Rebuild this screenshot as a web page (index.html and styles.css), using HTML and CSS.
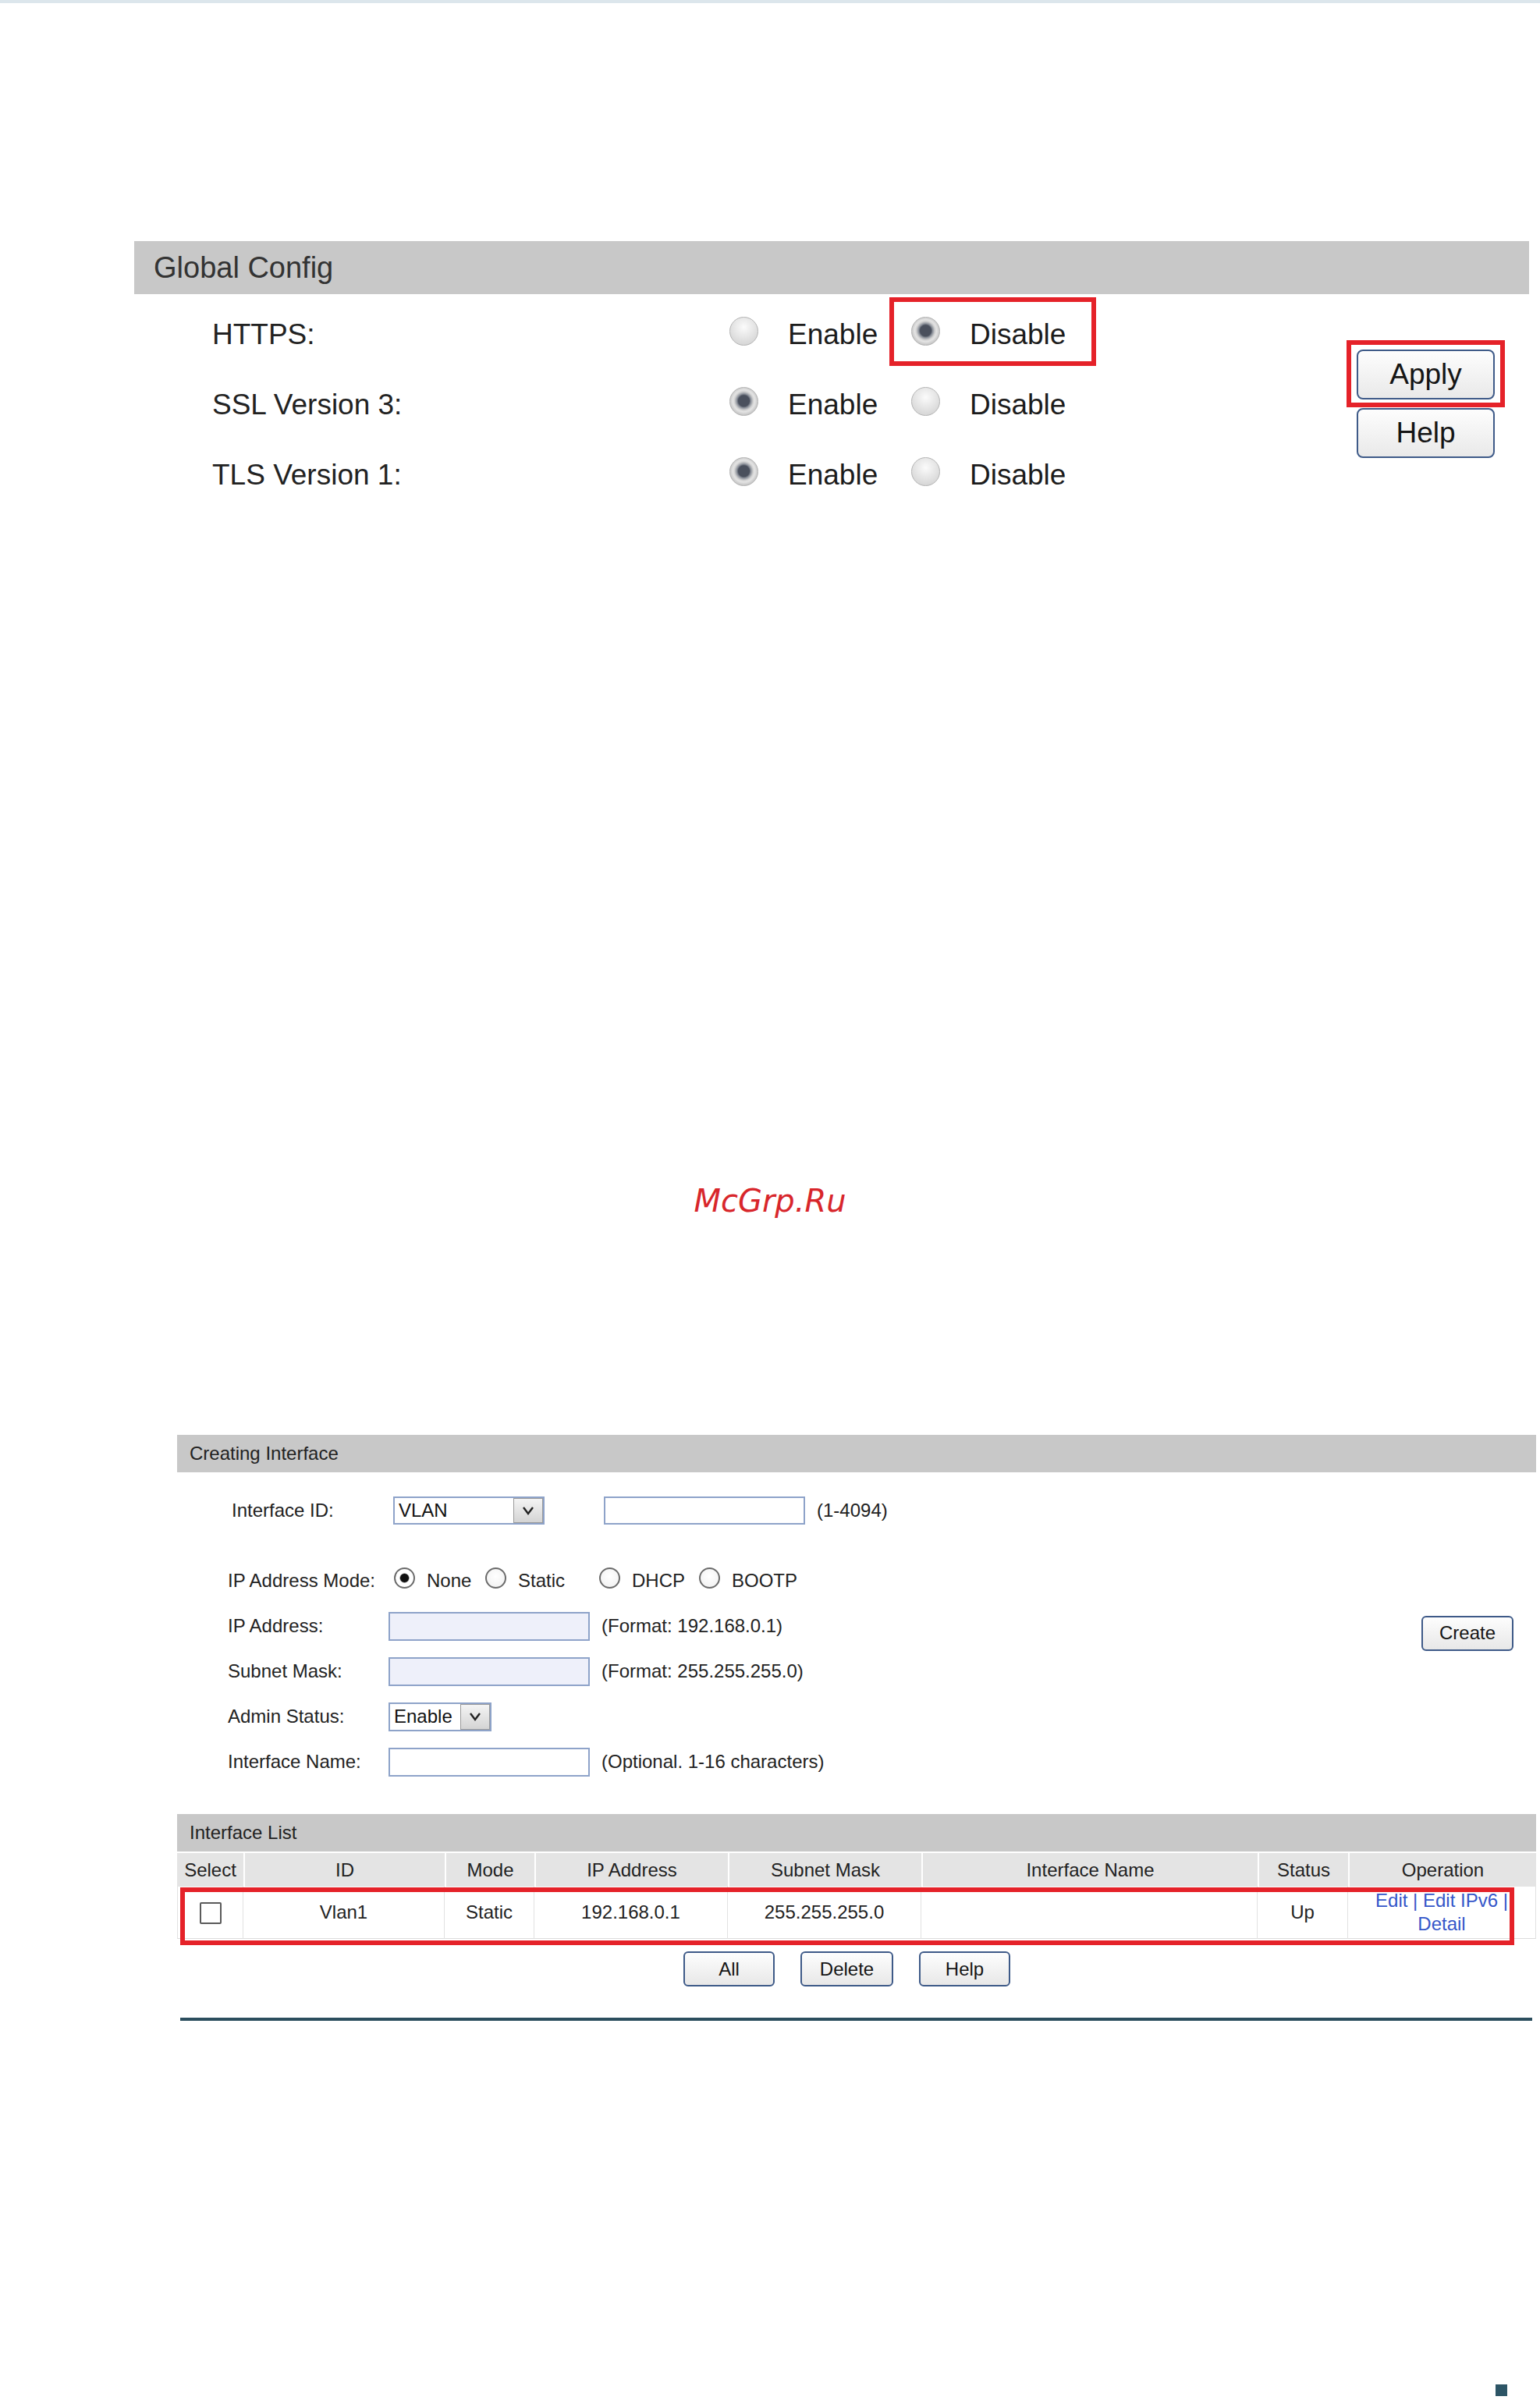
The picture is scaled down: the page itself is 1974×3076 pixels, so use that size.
FILE: index.html
```html
<!DOCTYPE html>
<html lang="en">
<head>
<meta charset="utf-8">
<title>Global Config / Creating Interface</title>
<link rel="stylesheet" href="styles.css">
</head>
<body>
<div class="topbar"></div>

<section class="fig1">
  <div class="bar-lg">Global Config</div>
  <div class="fig1-body">
    <div class="opts">
      <div class="orow">
        <span class="olabel">HTTPS:</span>
        <span class="opt"><span class="rad"></span><span>Enable</span></span>
        <span class="opt marked"><span class="rad on"></span><span>Disable</span></span>
      </div>
      <div class="orow">
        <span class="olabel">SSL Version 3:</span>
        <span class="opt"><span class="rad on"></span><span>Enable</span></span>
        <span class="opt"><span class="rad"></span><span>Disable</span></span>
      </div>
      <div class="orow">
        <span class="olabel">TLS Version 1:</span>
        <span class="opt"><span class="rad on"></span><span>Enable</span></span>
        <span class="opt"><span class="rad"></span><span>Disable</span></span>
      </div>
    </div>
    <div class="btns">
      <span class="markwrap"><button class="btn-lg">Apply</button></span>
      <button class="btn-lg">Help</button>
    </div>
  </div>
</section>

<div class="watermark">McGrp.Ru</div>

<section class="fig2">
  <div class="bar-sm">Creating Interface</div>
  <div class="form">
    <div class="frow idrow">
      <span class="flabel">Interface ID:</span>
      <span class="sel sel-id"><span class="val">VLAN</span><span class="arr"><svg width="18" height="14" viewBox="0 0 18 14"><polyline points="3,3 9,11 15,3" fill="none" stroke="#222" stroke-width="2.4"/></svg></span></span>
      <span class="inp inp-id"></span>
      <span class="hint">(1-4094)</span>
    </div>
    <div class="frow moderow">
      <span class="flabel">IP Address Mode:</span>
      <span class="mopt m1"><span class="rsm on"></span>None</span>
      <span class="mopt m2"><span class="rsm"></span>Static</span>
      <span class="mopt m3"><span class="rsm"></span>DHCP</span>
      <span class="mopt m4"><span class="rsm"></span>BOOTP</span>
    </div>
    <div class="frow">
      <span class="flabel">IP Address:</span>
      <span class="inp dis"></span>
      <span class="hint">(Format: 192.168.0.1)</span>
      <button class="btn-sm create">Create</button>
    </div>
    <div class="frow">
      <span class="flabel">Subnet Mask:</span>
      <span class="inp dis"></span>
      <span class="hint">(Format: 255.255.255.0)</span>
    </div>
    <div class="frow">
      <span class="flabel">Admin Status:</span>
      <span class="sel sel-admin"><span class="val">Enable</span><span class="arr"><svg width="18" height="14" viewBox="0 0 18 14"><polyline points="3,3 9,11 15,3" fill="none" stroke="#222" stroke-width="2.4"/></svg></span></span>
    </div>
    <div class="frow">
      <span class="flabel">Interface Name:</span>
      <span class="inp"></span>
      <span class="hint">(Optional. 1-16 characters)</span>
    </div>
  </div>

  <div class="bar-sm list-bar">Interface List</div>
  <div class="listwrap">
    <table class="list">
      <colgroup>
        <col class="c-sel"><col class="c-id"><col class="c-mode"><col class="c-ip"><col class="c-mask"><col class="c-name"><col class="c-st"><col class="c-op">
      </colgroup>
      <thead>
        <tr><th>Select</th><th>ID</th><th>Mode</th><th>IP Address</th><th>Subnet Mask</th><th>Interface Name</th><th>Status</th><th>Operation</th></tr>
      </thead>
      <tbody>
        <tr>
          <td><span class="chk"></span></td>
          <td>Vlan1</td>
          <td>Static</td>
          <td>192.168.0.1</td>
          <td>255.255.255.0</td>
          <td></td>
          <td>Up</td>
          <td class="ops"><a>Edit</a> | <a>Edit IPv6</a> |<br><a>Detail</a></td>
        </tr>
      </tbody>
    </table>
    <div class="rowmark"></div>
  </div>
  <div class="lbtns">
    <button class="btn-sm b-all">All</button>
    <button class="btn-sm b-del">Delete</button>
    <button class="btn-sm b-help">Help</button>
  </div>
  <div class="rule"></div>
</section>

<div class="pagemark"></div>
</body>
</html>
```

FILE: styles.css
```css
*, *::before, *::after { box-sizing: border-box; }
html, body { margin: 0; padding: 0; }
body {
  width: 1974px;
  height: 3076px;
  overflow: hidden;
  background: #fff;
  font-family: "Liberation Sans", Arial, sans-serif;
  color: #1e1e1e;
}

.topbar { height: 4px; background: #dce6ec; }

/* ---------- Figure 1 ---------- */
.fig1 { margin: 305px 0 0 172px; width: 1788px; }
.bar-lg {
  height: 68px;
  line-height: 68px;
  background: #c8c8c8;
  font-size: 38px;
  color: #333;
  padding-left: 25px;
}
.fig1-body {
  display: flex;
  justify-content: space-between;
  padding-top: 7px;
}
.orow {
  display: grid;
  grid-template-columns: 663px 233px auto;
  padding-left: 100px;
  height: 90px;
  line-height: 90px;
  font-size: 37px;
  color: #1c1c1c;
}
.olabel { color: #222; }
.opt { display: flex; align-items: center; position: relative; }
.rad {
  width: 37px;
  height: 37px;
  border-radius: 50%;
  margin-right: 38px;
  margin-bottom: 10px;
  border: 1.5px solid #b4b4b4;
  background: radial-gradient(circle at 50% 35%, #fbfbfb 0, #e6e6e6 45%, #cdcdcd 100%);
  flex: none;
}
.rad.on {
  background: radial-gradient(circle at 50% 48%, #4a505d 0, #4a505d 7px, #8d929b 9px, #d3d3d3 12px, #e4e4e4 14px, #c6c6c6 18px);
}
.opt.marked::after {
  content: "";
  position: absolute;
  left: -28px;
  top: -3px;
  width: 265px;
  height: 88px;
  border: 6px solid #e52229;
}
.btns {
  display: flex;
  flex-direction: column;
  gap: 11px;
  margin: 64px 44px 0 0;
}
.markwrap { display: block; position: relative; }
.markwrap::after {
  content: "";
  position: absolute;
  left: -13px;
  top: -12px;
  right: -13px;
  bottom: -10px;
  border: 6px solid #e52229;
  pointer-events: none;
}
.btn-lg {
  display: block;
  width: 177px;
  height: 64px;
  border: 2px solid #3e5a88;
  border-radius: 8px;
  background: linear-gradient(#fdfdfd, #e9e9e9);
  font-family: "Liberation Sans", Arial, sans-serif;
  font-size: 37px;
  color: #151515;
  padding: 0;
}

/* ---------- Watermark ---------- */
.watermark {
  margin-top: 861px;
  height: 48px;
  line-height: 48px;
  text-align: center;
  font-family: "DejaVu Sans", sans-serif;
  font-style: oblique;
  font-size: 40px;
  color: #d8262b;
}

/* ---------- Figure 2 ---------- */
.fig2 {
  margin: 276px 0 0 227px;
  width: 1742px;
  font-size: 24px;
  color: #222;
}
.bar-sm {
  height: 48px;
  line-height: 48px;
  background: #c8c8c8;
  padding-left: 16px;
  color: #222;
}
.form { padding-top: 25px; }
.frow {
  display: flex;
  align-items: center;
  height: 58px;
  padding-left: 65px;
}
.frow.idrow { height: 48px; padding-left: 70px; margin-bottom: 37px; }
.flabel { width: 206px; flex: none; }
.idrow .flabel { width: 207px; }
.moderow .flabel { width: 213px; }

.sel {
  display: flex;
  height: 36px;
  border: 2px solid #8ea3c9;
  background: #fff;
  flex: none;
}
.sel-id { width: 194px; }
.sel-admin { width: 132px; height: 37px; }
.sel .val { flex: 1; padding-left: 5px; line-height: 32px; color: #111; }
.sel .arr {
  width: 38px;
  background: linear-gradient(#f4f4f4, #d4d4d4);
  border: 1px solid #9a9a9a;
  display: flex;
  align-items: center;
  justify-content: center;
}
.inp {
  width: 258px;
  height: 37px;
  border: 2px solid #8ea3c9;
  background: #fff;
  flex: none;
}
.inp-id { margin-left: 76px; height: 36px; }
.inp.dis { background: #eef0fa; }
.hint { margin-left: 15px; }

.mopt { display: flex; align-items: center; flex: none; }
.m1 { width: 117px; }
.m2 { width: 146px; }
.m3 { width: 128px; }
.rsm {
  width: 27px;
  height: 27px;
  border-radius: 50%;
  border: 2px solid #6b6b6b;
  background: radial-gradient(circle at 50% 40%, #ffffff 0, #f4f4f4 70%, #e0e0e0 100%);
  margin-right: 15px;
  margin-bottom: 8px;
  flex: none;
}
.rsm.on { background: radial-gradient(circle, #111 0, #111 5px, #fff 6.5px); }

.btn-sm {
  height: 45px;
  border: 2px solid #3e5a88;
  border-radius: 6px;
  background: linear-gradient(#fdfdfd, #e8e8e8);
  font-family: "Liberation Sans", Arial, sans-serif;
  font-size: 24px;
  color: #151515;
  padding: 0;
}
.create { width: 118px; margin: 18px 29px 0 auto; }

.list-bar { margin-top: 38px; }
.listwrap { position: relative; margin-top: 2px; }
table.list {
  width: 1742px;
  border-collapse: separate;
  border-spacing: 0;
  table-layout: fixed;
  font-size: 24px;
  color: #222;
}
.c-sel { width: 85px; }
.c-id { width: 258px; }
.c-mode { width: 115px; }
.c-ip { width: 248px; }
.c-mask { width: 248px; }
.c-name { width: 431px; }
.c-st { width: 116px; }
.c-op { width: 241px; }
.list th {
  height: 43px;
  background: #e4e4e4;
  font-weight: normal;
  border-left: 2px solid #fff;
  padding: 0;
  text-align: center;
}
.list th:first-child { border-left: 0; }
.list td {
  height: 67px;
  text-align: center;
  padding: 0;
  border-right: 1px solid #e2e2e2;
  border-bottom: 1px solid #dcdcdc;
}
.list td:first-child { border-left: 1px solid #e2e2e2; }
.chk {
  display: inline-block;
  width: 28px;
  height: 28px;
  border: 2px solid #5a5a5a;
  border-radius: 2px;
  background: #fff;
  vertical-align: middle;
}
.ops { line-height: 30px; color: #3556c9; }
.ops a { color: #3556c9; text-decoration: none; }
.rowmark {
  position: absolute;
  left: 4px;
  top: 44px;
  width: 1710px;
  height: 74px;
  border: 6px solid #e52229;
  pointer-events: none;
}

.lbtns {
  display: flex;
  gap: 33px;
  padding-left: 649px;
  margin-top: 16px;
}
.b-all { width: 117px; }
.b-del { width: 119px; }
.b-help { width: 117px; }

.rule {
  margin: 40px 0 0 4px;
  width: 1733px;
  height: 4px;
  background: #2c4e5e;
}

.pagemark {
  margin: 466px 0 0 1917px;
  width: 15px;
  height: 15px;
  background: #2d5566;
}
```
